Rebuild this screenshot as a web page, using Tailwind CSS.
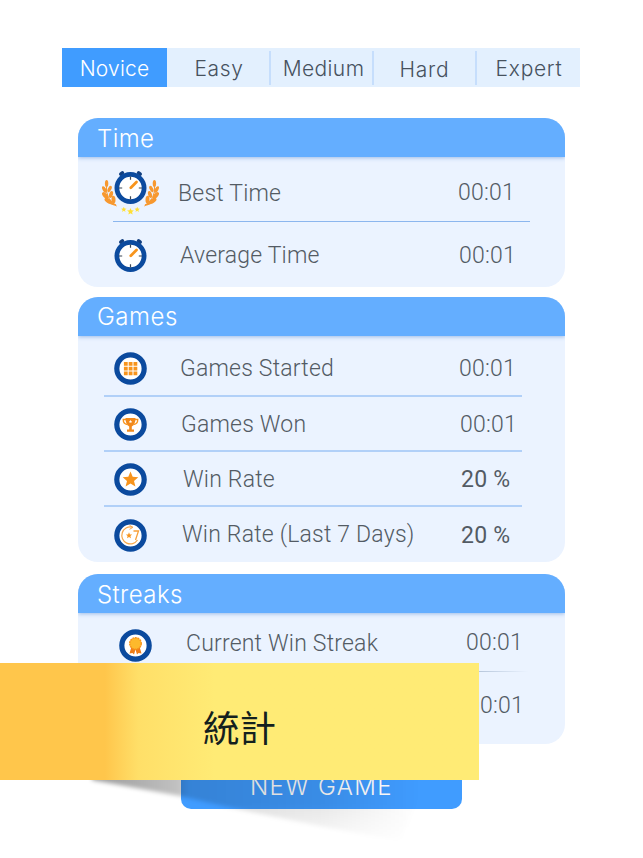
<!DOCTYPE html>
<html lang="zh-Hant">
<head>
  <meta charset="UTF-8">
  <meta name="viewport" content="width=device-width, initial-scale=1.0">
  <title>統計</title>
  <script src="https://cdn.jsdelivr.net/npm/@tailwindcss/browser@4"></script>
</head>
<body class="bg-white">
  <!-- Shared icon shapes -->
  <svg class="hidden">
    <defs>
      <g id="ring">
        <circle cx="28.500" cy="28.500" r="13.700" fill="#fff" stroke="#0b4a9e" stroke-width="5.200"/>
      </g>
      <g id="watch">
        <path d="M18.800 15.200l1.600-1.300M38.200 15.200l-1.600-1.300" stroke="#123f80" stroke-width="3.600" stroke-linecap="round"/>
        <circle cx="28.500" cy="29" r="13.600" fill="#fff" stroke="#0b4a9e" stroke-width="4.800"/>
        <path d="M28.500 17.500v3.200M28.500 37.300v3.200M17 29h3.200M36.800 29h3.200" stroke="#3b4654" stroke-width="1.200"/>
        <path d="M28.800 28.700L34.500 23" stroke="#f7941d" stroke-width="2.800" stroke-linecap="round"/>
      </g>
      <path id="star" d="M0-8L2.200-2.700 7.800-2.300 3.500 1.400 4.900 7 0 4-4.900 7-3.500 1.400-7.800-2.300-2.200-2.700Z"/>
      <g id="laurel" fill="#f7982f">
        <path d="M14.500 47Q3 40 4.500 26" fill="none" stroke="#f7982f" stroke-width="1"/>
        <ellipse cx="4.600" cy="24.500" rx="1.700" ry="3.500"/>
        <ellipse cx="2.400" cy="30.500" rx="1.800" ry="3.600" transform="rotate(-28 2.400 30.500)"/>
        <ellipse cx="7.600" cy="30" rx="1.700" ry="3.400" transform="rotate(28 7.600 30)"/>
        <ellipse cx="3.200" cy="36.500" rx="2.100" ry="4" transform="rotate(-42 3.200 36.500)"/>
        <ellipse cx="9" cy="35.500" rx="1.900" ry="3.600" transform="rotate(16 9 35.500)"/>
        <ellipse cx="6.300" cy="41.800" rx="2.200" ry="4.200" transform="rotate(-58 6.300 41.800)"/>
        <ellipse cx="11.500" cy="40.500" rx="2" ry="3.800" transform="rotate(-4 11.500 40.500)"/>
        <ellipse cx="11" cy="45" rx="1.200" ry="3.600" transform="rotate(-68 11 45)"/>
      </g>
    </defs>
  </svg>

  <div class="relative w-[643px] h-[858px] overflow-hidden pt-[48px]">

    <!-- Difficulty tabs -->
    <nav class="ml-[62px] w-[518px] h-[39px] flex items-center bg-[#e3f0fe] text-[#47525e] font-['Inter'] font-light text-[21px] tracking-[0.4px]">
      <a class="w-[105px] h-full flex items-center justify-center pt-[3px] bg-[#409cff] text-white tracking-[0.2px]">Novice</a>
      <a class="w-[104px] h-[34px] flex items-center justify-center pt-[3px] pl-[2px] border-r-2 border-[#c6defc] tracking-[0.6px]">Easy</a>
      <a class="w-[103px] h-[34px] flex items-center justify-center pt-[3px] pl-[4px] border-r-2 border-[#c6defc]">Medium</a>
      <a class="w-[103px] h-[34px] flex items-center justify-center pt-[4px] border-r-2 border-[#c6defc] tracking-[0.8px]">Hard</a>
      <a class="w-[103px] h-[34px] flex items-center justify-center pt-[3px] pl-px tracking-[0.7px]">Expert</a>
    </nav>

    <main class="ml-[78px] mt-[31px] w-[487px] text-[#535b64] font-['Roboto'] font-light text-[23px] leading-[28px] tracking-[0.2px] whitespace-nowrap">

      <!-- Time -->
      <section class="h-[169px] rounded-[20px] overflow-hidden bg-[#ebf3ff]">
        <h2 class="h-[39px] pl-[19px] pt-[7px] bg-[#64aeff] text-white font-['Inter'] font-light text-[24px] tracking-[0.4px] shadow-[0_1px_4px_#9dbde8]">Time</h2>
        <div class="h-[64px] flex items-center pt-[10px]">
          <svg class="ml-[24px] -mt-[10px] w-[58px] h-[58px] shrink-0 overflow-visible" viewBox="0 0 58 58">
            <g transform="translate(0 -1)">
              <use href="#laurel"/>
              <use href="#laurel" transform="translate(57) scale(-1 1)"/>
              <g fill="#ffdf35">
                <use href="#star" transform="translate(28.500 52.500) scale(.44)"/>
                <use href="#star" transform="translate(21.800 50.500) scale(.34)"/>
                <use href="#star" transform="translate(35.200 50.500) scale(.34)"/>
              </g>
              <use href="#watch"/>
            </g>
          </svg>
          <span class="ml-[18px] w-[280px]">Best Time</span>
          <span class="-mt-[2px]">00:01</span>
        </div>
        <div class="ml-[35px] w-[417px] h-px bg-[#8bb6ee]"></div>
        <div class="h-[65px] flex items-center pt-[2px]">
          <svg class="ml-[24px] w-[58px] h-[58px] shrink-0" viewBox="0 0 58 58"><use href="#watch"/></svg>
          <span class="ml-[20px] w-[279px]">Average Time</span>
          <span>00:01</span>
        </div>
      </section>

      <!-- Games -->
      <section class="mt-[10px] h-[265px] rounded-[20px] overflow-hidden bg-[#ebf3ff]">
        <h2 class="h-[39px] pl-[19px] pt-[6px] bg-[#64aeff] text-white font-['Inter'] font-light text-[24px] tracking-[0.5px] shadow-[0_1px_4px_#9dbde8]">Games</h2>
        <div class="h-[59px] flex items-center pt-[7px]">
          <svg class="ml-[24px] -mt-px w-[58px] h-[58px] shrink-0" viewBox="0 0 58 58">
            <use href="#ring"/>
            <path d="M21.900 21.900h3.800v3.800h-3.800zM26.700 21.900h3.800v3.800h-3.800zM31.500 21.900h3.800v3.800h-3.800zM21.900 26.700h3.800v3.800h-3.800zM26.700 26.700h3.800v3.800h-3.800zM31.500 26.700h3.800v3.800h-3.800zM21.900 31.500h3.800v3.800h-3.800zM26.700 31.500h3.800v3.800h-3.800zM31.500 31.500h3.800v3.800h-3.800z" fill="#f7941d"/>
          </svg>
          <span class="ml-[20px] w-[279px]">Games Started</span>
          <span>00:01</span>
        </div>
        <div class="ml-[26px] w-[418px] h-[2px] bg-[#b1d0f8]"></div>
        <div class="h-[53px] flex items-center pt-[2px]">
          <svg class="ml-[24px] w-[58px] h-[58px] shrink-0" viewBox="0 0 58 58">
            <use href="#ring"/>
            <g transform="translate(-.5 -.5)">
              <path d="M24.500 24h-2.800q0 4.500 4.200 5M33.500 24h2.800q0 4.500-4.200 5" fill="none" stroke="#f7941d" stroke-width="1.300"/>
              <path d="M24 22.500h10q0 6.500-3.700 8.500v3h2.200v2.300h-7V34h2.200v-3Q24 29 24 22.500z" fill="#f28a1c"/>
              <use href="#star" transform="translate(29 26) scale(.22)" fill="#fff"/>
            </g>
          </svg>
          <span class="ml-[21px] w-[279px]">Games Won</span>
          <span>00:01</span>
        </div>
        <div class="ml-[26px] w-[418px] h-[2px] bg-[#b1d0f8]"></div>
        <div class="h-[53px] flex items-center pt-[3px]">
          <svg class="ml-[24px] -mt-px w-[58px] h-[58px] shrink-0" viewBox="0 0 58 58">
            <use href="#ring"/>
            <use href="#star" x="28.500" y="28.500" fill="#f7941d"/>
          </svg>
          <span class="ml-[23px] w-[278px]">Win Rate</span>
          <span class="font-normal">20 %</span>
        </div>
        <div class="ml-[26px] w-[418px] h-[2px] bg-[#b1d0f8]"></div>
        <div class="h-[55px] flex items-center pt-px">
          <svg class="ml-[24px] mt-px w-[58px] h-[58px] shrink-0" viewBox="0 0 58 58">
            <use href="#ring"/>
            <g transform="translate(0 -.5)">
              <path d="M30 20.600A8.500 8.500 0 1 0 35.500 33.500" fill="none" stroke="#f8a84c" stroke-width="1.200"/>
              <path d="M27.500 18.800l3.500 2-3.500 2" fill="none" stroke="#f8a84c" stroke-width="1"/>
              <use href="#star" transform="translate(27 29) scale(.4)" fill="#f7941d"/>
              <path d="M31.500 24.500h5l-3 9" fill="none" stroke="#f7a03a" stroke-width="1.300"/>
            </g>
          </svg>
          <span class="ml-[22px] w-[279px]">Win Rate (Last 7 Days)</span>
          <span class="mt-[2px] font-normal">20 %</span>
        </div>
      </section>

      <!-- Streaks -->
      <section class="mt-[12px] h-[170px] rounded-[20px] overflow-hidden bg-[#ebf3ff]">
        <h2 class="h-[39px] pl-[19px] pt-[7px] bg-[#64aeff] text-white font-['Inter'] font-light text-[24px] tracking-[0.4px] shadow-[0_1px_4px_#9dbde8]">Streaks</h2>
        <div class="h-[58px] flex items-center pt-[3px]">
          <svg class="ml-[29px] mt-[4px] w-[58px] h-[58px] shrink-0" viewBox="0 0 58 58">
            <use href="#ring"/>
            <g transform="translate(0 -.5)">
              <path d="M24.500 30l-2 7 3-.5 1.500 1.500 1.500-5 1.500 5 1.500-1.500 3 .5-2-7z" fill="#ef7d17"/>
              <circle cx="28.500" cy="27" r="5.800" fill="#fdb92c" stroke="#f7941d" stroke-width="1.400" stroke-dasharray="2 .6"/>
            </g>
          </svg>
          <span class="ml-[21px] w-[280px]">Current Win Streak</span>
          <span class="-mt-px">00:01</span>
        </div>
        <div class="ml-[26px] w-[424px] h-px bg-linear-to-r from-[#b5c5da] from-88% to-[#ebf3ff]"></div>
        <div class="h-[66px] flex items-center pl-[389px] pt-px">
          <span>00:01</span>
        </div>
      </section>

      <button class="block ml-[103px] mt-[13px] w-[281px] h-[52px] pt-[7px] rounded-[10px] bg-[#409cff] text-white font-['Inter'] font-light text-[24px] tracking-[1.4px]">NEW GAME</button>
    </main>

    <!-- Shadow under the folded ribbon -->
    <svg class="absolute left-0 top-[779px] w-[480px] h-[79px]" viewBox="0 0 480 79">
      <defs>
        <linearGradient id="fall" gradientUnits="userSpaceOnUse" x1="90" y1="0" x2="420" y2="0">
          <stop offset="0" stop-color="#000" stop-opacity=".4"/>
          <stop offset=".27" stop-color="#000" stop-opacity=".24"/>
          <stop offset=".3" stop-color="#000" stop-opacity=".16"/>
          <stop offset=".7" stop-color="#000" stop-opacity=".1"/>
          <stop offset="1" stop-color="#000" stop-opacity="0"/>
        </linearGradient>
        <linearGradient id="down" x1="0" y1="0" x2="0" y2="1">
          <stop offset=".3" stop-color="#fff"/>
          <stop offset=".85" stop-color="#fff" stop-opacity=".1"/>
        </linearGradient>
        <mask id="fade"><rect width="480" height="79" fill="url(#down)"/></mask>
        <filter id="soft"><feGaussianBlur stdDeviation="2"/></filter>
      </defs>
      <g mask="url(#fade)">
        <path d="M92-8V1L180 17Q290 43 400 62L430-8Z" fill="url(#fall)" filter="url(#soft)"/>
      </g>
    </svg>

    <!-- Ribbon -->
    <div class="absolute left-0 top-[663px] w-[479px] h-[117px] flex items-center pl-[203px] pt-[12px] bg-linear-to-r from-[#ffc64b] from-[105px] via-[#ffdf68] via-[138px] to-[#ffeb75] to-[215px]">
      <h1 class="font-['Noto_Sans_CJK_TC',sans-serif] text-[36.500px] leading-none text-[#13201e]">統計</h1>
    </div>
  </div>
</body>
</html>
